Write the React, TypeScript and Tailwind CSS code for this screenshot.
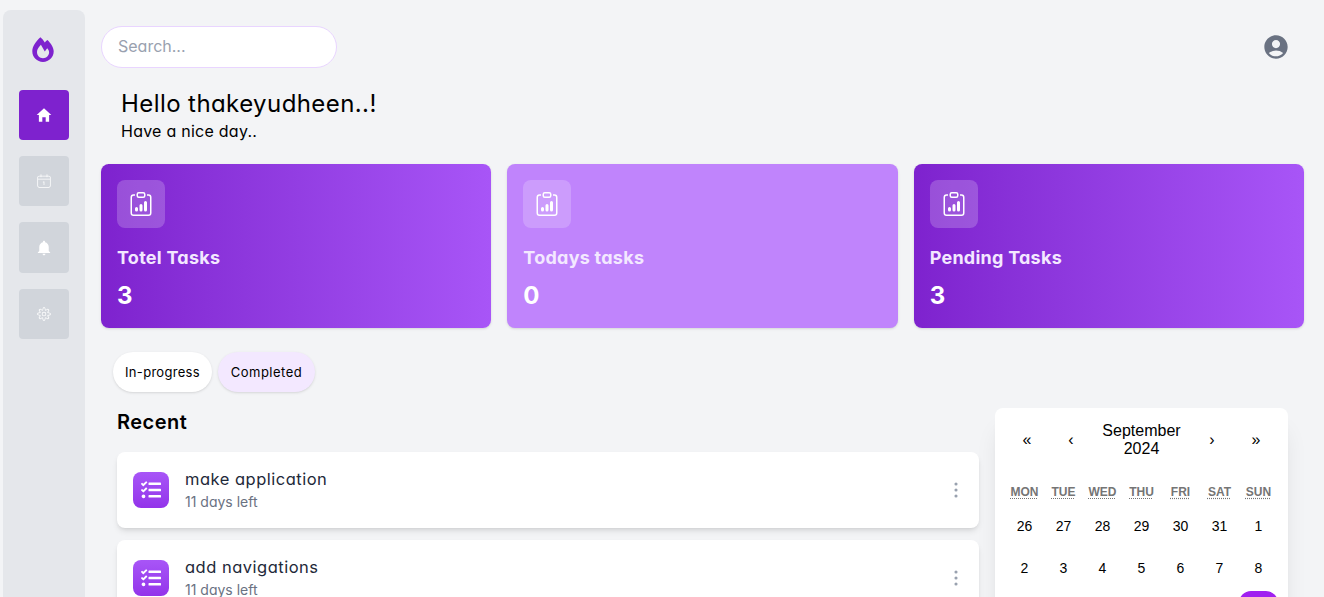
import type { ReactNode } from "react";
import { FaTasks } from "react-icons/fa";
import { IoMdHome, IoMdNotifications } from "react-icons/io";
import { CiCalendarDate, CiSettings } from "react-icons/ci";
import { BsClipboardData } from "react-icons/bs";
import { MdAccountCircle } from "react-icons/md";

function FlameLogo() {
  return (
    <svg width="22" height="25" viewBox="0 0 22 25" fill="#7e22ce" fillRule="evenodd">
      <path d="M8.4 0.3C10 1.7 11.5 3.5 12.8 5.4C13.6 4.4 14.5 3.5 15.5 2.9C18.9 6.2 21.7 10.6 21.7 14.3C21.7 20.2 17 25 11 25S0.3 20.2 0.3 14.3C0.3 9.5 3.9 4.4 8.4 0.3ZM8.9 7.8C6.8 10 5 12.6 5 15C5 18.6 7.6 21.2 11 21.2S17.1 18.6 17.1 15.3C17.1 13.9 16.4 12.5 15.2 11.3L12.8 14.4Z" />
    </svg>
  );
}

function MoreDots() {
  return (
    <svg width="4" height="16" viewBox="0 0 4 16" className="mr-[5px] fill-gray-400">
      <circle cx="2" cy="2" r="1.55" />
      <circle cx="2" cy="8" r="1.55" />
      <circle cx="2" cy="14" r="1.55" />
    </svg>
  );
}

function NavButton({ active, children }: { active?: boolean; children: ReactNode }) {
  return (
    <button
      className={`flex h-[50.4px] w-[50px] shrink-0 items-center justify-center rounded text-lg text-white ${
        active ? "bg-[#7e22ce]" : "bg-[#d1d5db]"
      }`}
    >
      {children}
    </button>
  );
}

function Sidebar() {
  return (
    <aside className="ml-[3px] mt-[10px] flex w-[82px] shrink-0 flex-col items-center gap-4 rounded-t-lg bg-[#e5e7eb]">
      <div className="flex h-[63.6px] w-full items-start justify-center pt-[27px] pr-[2px]">
        <FlameLogo />
      </div>
      <NavButton active>
        <IoMdHome />
      </NavButton>
      <NavButton>
        <CiCalendarDate />
      </NavButton>
      <NavButton>
        <IoMdNotifications />
      </NavButton>
      <NavButton>
        <CiSettings />
      </NavButton>
    </aside>
  );
}

function StatCard({ title, value, className }: { title: string; value: string; className: string }) {
  return (
    <section className={`h-[164px] rounded-lg p-4 shadow ${className}`}>
      <div className="flex size-12 items-center justify-center rounded-lg bg-white/20 text-2xl text-white">
        <BsClipboardData />
      </div>
      <h2 className="mt-4 text-lg leading-7 font-bold tracking-[0.25px] text-[#f3e8ff]">{title}</h2>
      <p className="mt-2 text-2xl leading-8 font-bold tracking-[-0.5px] text-white">{value}</p>
    </section>
  );
}

function TaskRow({ title }: { title: string }) {
  return (
    <li className="flex h-[76px] items-center rounded-lg bg-white px-4 shadow-md">
      <div className="flex size-9 items-center justify-center rounded-lg bg-linear-to-b from-[#a855f7] to-[#9333ea] text-xl text-white">
        <FaTasks />
      </div>
      <div className="ml-4 grow pt-px">
        <h3 className="text-[16.5px] leading-[23px] tracking-[0.5px] text-gray-800">{title}</h3>
        <p className="text-sm leading-[22px] text-gray-500">11 days left</p>
      </div>
      <MoreDots />
    </li>
  );
}

const weekdays = ["MON", "TUE", "WED", "THU", "FRI", "SAT", "SUN"];
const days = [26, 27, 28, 29, 30, 31, 1, 2, 3, 4, 5, 6, 7, 8];

function Calendar() {
  return (
    <section className="mt-[-3px] h-[360px] w-[293px] shrink-0 rounded-lg bg-white p-[10px] font-['Liberation_Sans',sans-serif] text-black shadow-xl">
      <div className="flex h-11 text-base leading-[18px]">
        <button className="w-11 shrink-0">«</button>
        <button className="w-11 shrink-0">‹</button>
        <button className="min-w-0 grow px-2">September 2024</button>
        <button className="w-11 shrink-0">›</button>
        <button className="w-11 shrink-0">»</button>
      </div>
      <div className="mt-4 grid grid-cols-7 pt-px text-center text-xs leading-[26px] font-bold text-[#757575]">
        {weekdays.map((day) => (
          <span key={day}>
            <abbr title={day} className="underline decoration-dotted underline-offset-2">
              {day}
            </abbr>
          </span>
        ))}
      </div>
      <div className="grid grid-cols-7 text-center text-sm leading-[42px]">
        {days.map((day) => (
          <span key={day}>{day}</span>
        ))}
        <span className="col-start-7 mt-[2px] h-10 rounded-xl bg-[#a020f0]" />
      </div>
    </section>
  );
}

export default function App() {
  return (
    <div className="flex h-[597px] w-full overflow-hidden bg-[#f3f4f6] font-['Inter',sans-serif] [font-feature-settings:'cv11']">
      <Sidebar />
      <main className="flex min-w-0 grow flex-col pt-[26px] pr-5 pl-4">
        <header className="flex h-[42px] shrink-0 items-center justify-between">
          <input
            placeholder="Search..."
            className="h-[42px] w-[236px] rounded-full border border-[#e9d5ff] bg-white px-4 pb-[2px] text-base placeholder:text-gray-400"
          />
          <MdAccountCircle className="mr-[14px] text-[28px] text-gray-500" />
        </header>
        <div className="mt-5 h-14 shrink-0 pl-5 text-black">
          <h1 className="text-2xl leading-8 font-normal tracking-[0.42px]">Hello thakeyudheen..!</h1>
          <p className="text-base leading-[22px] tracking-[0.25px]">Have a nice day..</p>
        </div>
        <div className="mt-5 grid shrink-0 grid-cols-3 gap-4">
          <StatCard title="Totel Tasks" value="3" className="bg-linear-to-r from-[#7e22ce] to-[#a855f7]" />
          <StatCard title="Todays tasks" value="0" className="bg-[#c084fc]" />
          <StatCard title="Pending Tasks" value="3" className="bg-linear-to-r from-[#7e22ce] to-[#a855f7]" />
        </div>
        <div className="mt-6 flex shrink-0 gap-[6px] pl-3 text-[13px] text-black">
          <button className="h-10 w-[99px] rounded-full bg-white pt-[2px] tracking-[0.3px] shadow-sm">In-progress</button>
          <button className="h-10 w-[97px] rounded-full bg-[#f3e8ff] pt-[2px] tracking-[0.5px] shadow-sm">Completed</button>
        </div>
        <div className="mt-[19px] flex shrink-0 gap-4 px-4">
          <section className="w-[862px] shrink-0">
            <h2 className="text-xl leading-[22px] font-semibold tracking-[0.5px] text-black">Recent</h2>
            <ul className="mt-[19px] flex flex-col gap-3">
              <TaskRow title="make application" />
              <TaskRow title="add navigations" />
            </ul>
          </section>
          <Calendar />
        </div>
      </main>
    </div>
  );
}
